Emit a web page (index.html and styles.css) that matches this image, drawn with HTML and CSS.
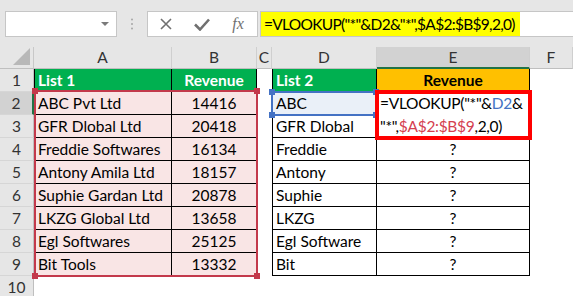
FILE: index.html
```html
<!DOCTYPE html>
<html lang="en">
<head>
    <meta charset="UTF-8">
    <title>VLOOKUP wildcard</title>
    <link rel="stylesheet" href="styles.css">
</head>
<body>
    <div class="toolbar">
        <div class="namebox"><span class="caret"></span></div>
        <div class="grip">
            <svg width="4" height="12" viewBox="0 0 4 12"><circle cx="2" cy="1.5" r="1" fill="#a6a6a6"/><circle cx="2" cy="6" r="1" fill="#a6a6a6"/><circle cx="2" cy="10.5" r="1" fill="#a6a6a6"/></svg>
        </div>
        <div class="fxbox">
            <span class="slot"><svg width="12" height="12" viewBox="0 0 12 12"><path d="M1 1 L11 11 M11 1 L1 11" stroke="#707070" stroke-width="1.6" fill="none"/></svg></span>
            <span class="slot"><svg width="16" height="13" viewBox="0 0 16 13"><path d="M1 6.5 L6 11.5 L15 1.5" stroke="#707070" stroke-width="2.6" fill="none"/></svg></span>
            <span class="slot fx">fx</span>
        </div>
        <div class="formula"><span class="formula-text">=VLOOKUP("*"&amp;D2&amp;"*",$A$2:$B$9,2,0)</span></div>
    </div>

    <div class="sheet">
        <div class="corner"><svg width="17" height="17" viewBox="0 0 17 17"><polygon points="17,0 17,17 0,17" fill="#b8b8b8"/></svg></div>
        <div class="col-h">A</div>
        <div class="col-h">B</div>
        <div class="col-h">C</div>
        <div class="col-h">D</div>
        <div class="col-h active">E</div>
        <div class="col-h">F</div>

        <div class="row-h">1</div>
        <div class="cell box first green">List 1</div>
        <div class="cell box green mid">Revenue</div>
        <div class="cell"></div>
        <div class="cell box first green">List 2</div>
        <div class="cell box gold mid">Revenue</div>
        <div class="cell"></div>

        <div class="row-h active">2</div>
        <div class="cell box first pink">ABC Pvt Ltd</div>
        <div class="cell box pink mid">14416</div>
        <div class="cell"></div>
        <div class="cell box first lookup">ABC</div>
        <div class="cell box editing">=VLOOKUP("*"&amp;<span class="ref-b">D2</span>&amp;<br>"*",<span class="ref-r">$A$2:$B$9</span>,2,0)</div>
        <div class="cell"></div>

        <div class="row-h">3</div>
        <div class="cell box first pink">GFR Dlobal Ltd</div>
        <div class="cell box pink mid">20418</div>
        <div class="cell"></div>
        <div class="cell box first">GFR Dlobal</div>
        <div class="cell"></div>

        <div class="row-h">4</div>
        <div class="cell box first pink">Freddie Softwares</div>
        <div class="cell box pink mid">16134</div>
        <div class="cell"></div>
        <div class="cell box first">Freddie</div>
        <div class="cell box mid">?</div>
        <div class="cell"></div>

        <div class="row-h">5</div>
        <div class="cell box first pink">Antony Amila Ltd</div>
        <div class="cell box pink mid">18157</div>
        <div class="cell"></div>
        <div class="cell box first">Antony</div>
        <div class="cell box mid">?</div>
        <div class="cell"></div>

        <div class="row-h">6</div>
        <div class="cell box first pink">Suphie Gardan Ltd</div>
        <div class="cell box pink mid">20878</div>
        <div class="cell"></div>
        <div class="cell box first">Suphie</div>
        <div class="cell box mid">?</div>
        <div class="cell"></div>

        <div class="row-h">7</div>
        <div class="cell box first pink">LKZG Global Ltd</div>
        <div class="cell box pink mid">13658</div>
        <div class="cell"></div>
        <div class="cell box first">LKZG</div>
        <div class="cell box mid">?</div>
        <div class="cell"></div>

        <div class="row-h">8</div>
        <div class="cell box first pink">Egl Softwares</div>
        <div class="cell box pink mid">25125</div>
        <div class="cell"></div>
        <div class="cell box first">Egl Software</div>
        <div class="cell box mid">?</div>
        <div class="cell"></div>

        <div class="row-h">9</div>
        <div class="cell box first pink">Bit Tools</div>
        <div class="cell box pink mid">13332</div>
        <div class="cell"></div>
        <div class="cell box first">Bit</div>
        <div class="cell box mid">?</div>
        <div class="cell"></div>

        <div class="row-h">10</div>
        <div class="cell"></div>
        <div class="cell"></div>
        <div class="cell"></div>
        <div class="cell"></div>
        <div class="cell"></div>
        <div class="cell"></div>

        <!-- formula reference highlights -->
        <div class="range red-range">
            <span class="handle tl"></span><span class="handle tr"></span>
            <span class="handle bl"></span><span class="handle br"></span>
        </div>
        <div class="range blue-range">
            <span class="handle tl"></span><span class="handle tr"></span>
            <span class="handle bl"></span><span class="handle br"></span>
        </div>
    </div>
</body>
</html>
```

FILE: styles.css
```css
* {
    margin: 0;
    padding: 0;
    box-sizing: border-box;
}

body {
    width: 573px;
    height: 296px;
    overflow: hidden;
    background: #fff;
    font-family: Lato, 'Open Sans', sans-serif;
    font-size: 15.5px;
    color: #000;
}

/* formula bar */
.toolbar {
    display: flex;
    align-items: flex-start;
    height: 47px;
    padding: 11px 0 0 5px;
    background: #e6e6e6;
}

.namebox {
    width: 112px;
    height: 26px;
    background: #fff;
    border: 1px solid #c6c6c6;
    display: flex;
    align-items: center;
    justify-content: flex-end;
    padding-right: 7px;
}

.caret {
    width: 0;
    height: 0;
    border-left: 4px solid transparent;
    border-right: 4px solid transparent;
    border-top: 4px solid #7a7a7a;
}

.grip {
    width: 30px;
    height: 26px;
    display: flex;
    align-items: center;
    justify-content: center;
}

.fxbox {
    width: 111px;
    height: 26px;
    background: #fff;
    border: 1px solid #c6c6c6;
    display: flex;
    align-items: center;
}

.slot {
    width: 36px;
    display: flex;
    justify-content: center;
    align-items: center;
}

.fx {
    font-family: 'Liberation Serif', serif;
    font-style: italic;
    font-size: 16px;
    color: #707070;
}

.formula {
    flex: 1;
    height: 26px;
    margin-left: 2px;
    background: #fff;
    border: 1px solid #c6c6c6;
    border-right: none;
}

.formula-text {
    display: inline-block;
    height: 24px;
    line-height: 24px;
    padding: 0 5px 0 3px;
    background: #ffff00;
    letter-spacing: -0.7px;
}

/* grid */
.sheet {
    position: relative;
    display: grid;
    grid-template-columns: 34px 138px 85px 15px 105px 153px 1fr;
    grid-template-rows: 22px repeat(10, 23px);
}

.corner {
    background: #e6e6e6;
    border-right: 1px solid #c8c8c8;
    border-bottom: 1px solid #bfbfbf;
    display: flex;
    align-items: flex-end;
    justify-content: flex-end;
    padding: 0 3px 3px 0;
}

.col-h {
    background: #e6e6e6;
    border-right: 1px solid #cfcfcf;
    border-bottom: 1px solid #bfbfbf;
    text-align: center;
    line-height: 21px;
    color: #333;
}

.col-h.active {
    background: #d2d2d2;
    border-bottom: 2px solid #217346;
}

.row-h {
    background: #e6e6e6;
    border-right: 1px solid #bfbfbf;
    border-bottom: 1px solid #d6d6d6;
    text-align: center;
    line-height: 22px;
    color: #333;
}

.row-h.active {
    background: #d2d2d2;
    border-right: 2px solid #217346;
}

.cell {
    padding: 0 3px;
    line-height: 22px;
    white-space: nowrap;
    overflow: hidden;
}

.box {
    border-right: 1px solid #000;
    border-bottom: 1px solid #000;
}

.first {
    border-left: 1px solid #000;
}

.green {
    background: #00b050;
    color: #fff;
    font-weight: bold;
}

.gold {
    background: #ffc000;
    font-weight: bold;
}

.pink {
    background: #f9e5e5;
}

.mid {
    text-align: center;
}

.lookup {
    background: #eaf0f8;
}

.editing {
    grid-row: span 2;
    position: relative;
    z-index: 3;
    overflow: visible;
    padding-left: 3px;
    line-height: 23px;
    letter-spacing: -0.3px;
    outline: 4px solid #ff0000;
    outline-offset: -2px;
    background: #fff;
}

.ref-b {
    color: #4472c4;
}

.ref-r {
    color: #d4404f;
}

/* reference outlines drawn over the cells */
.range {
    position: absolute;
    border: 2px solid;
    z-index: 2;
}

.red-range {
    left: 34px;
    top: 43px;
    width: 224px;
    height: 187px;
    border-color: #c3394b;
}

.blue-range {
    left: 271px;
    top: 44px;
    width: 106px;
    height: 25px;
    border-color: #4472c4;
}

.handle {
    position: absolute;
    width: 6px;
    height: 6px;
}

.red-range .handle {
    background: #c3394b;
}

.blue-range .handle {
    background: #4472c4;
}

.tl { top: -4px; left: -4px; }
.tr { top: -4px; right: -4px; }
.bl { bottom: -4px; left: -4px; }
.br { bottom: -4px; right: -4px; }
```
